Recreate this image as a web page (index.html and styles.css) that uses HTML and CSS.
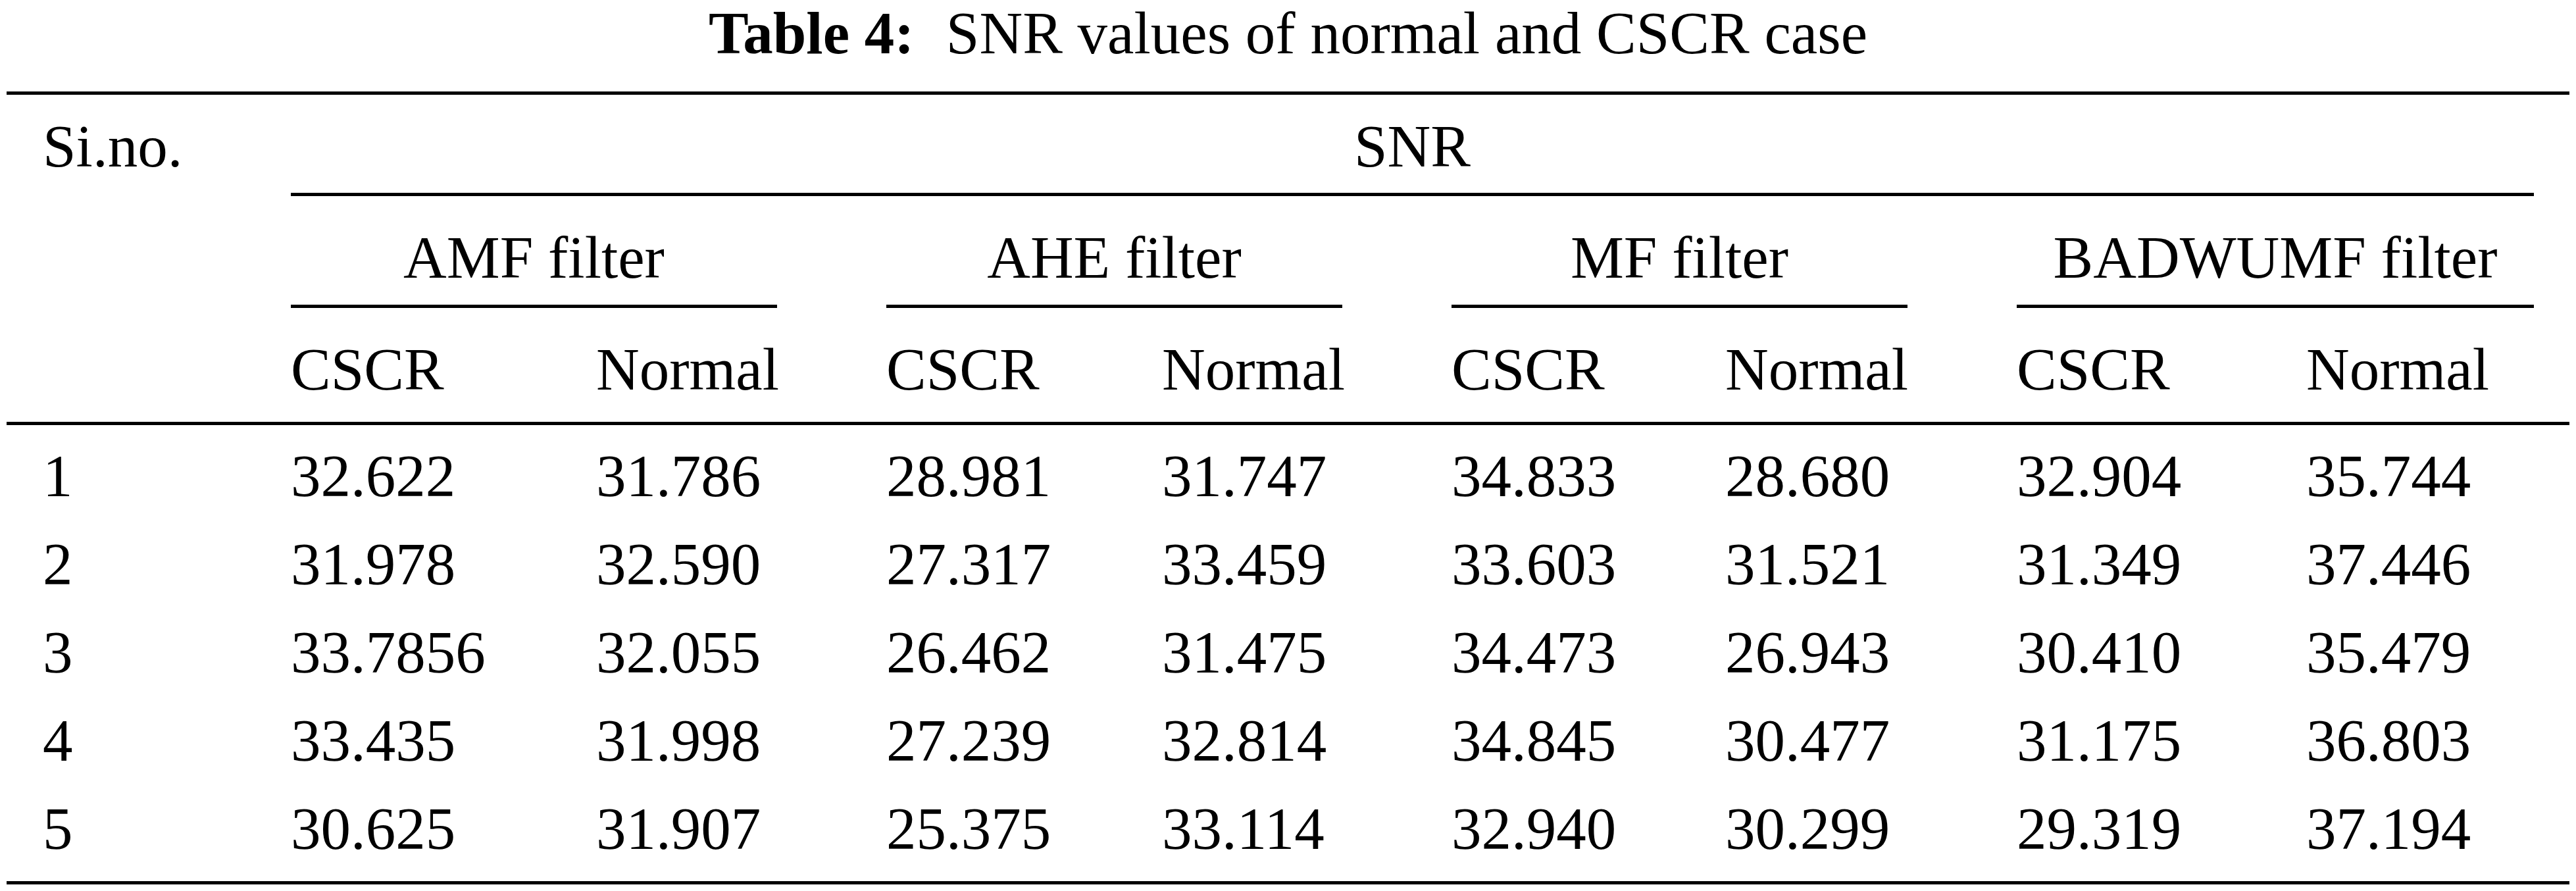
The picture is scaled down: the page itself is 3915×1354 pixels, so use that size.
FILE: index.html
```html
<!DOCTYPE html>
<html lang="en">
<head>
<meta charset="utf-8">
<title>Table 4: SNR values of normal and CSCR case</title>
<link rel="stylesheet" href="styles.css">
</head>
<body>
<div class="page">
  <div class="caption"><span class="caption-label">Table 4:</span> SNR values of normal and CSCR case</div>
  <table class="snr-table">
    <colgroup>
      <col class="c-no">
      <col class="c-amf-cscr">
      <col class="c-amf-normal">
      <col class="c-ahe-cscr">
      <col class="c-ahe-normal">
      <col class="c-mf-cscr">
      <col class="c-mf-normal">
      <col class="c-bad-cscr">
      <col class="c-bad-normal">
    </colgroup>
    <thead>
      <tr>
        <th rowspan="3" class="h-no">Si.no.</th>
        <th colspan="8" class="h-snr"><div class="rule-wrap snr-wrap">SNR</div></th>
      </tr>
      <tr>
        <th colspan="2" class="h-group"><div class="rule-wrap group-wrap">AMF filter</div></th>
        <th colspan="2" class="h-group"><div class="rule-wrap group-wrap">AHE filter</div></th>
        <th colspan="2" class="h-group"><div class="rule-wrap group-wrap">MF filter</div></th>
        <th colspan="2" class="h-group h-group-last"><div class="rule-wrap group-wrap">BADWUMF filter</div></th>
      </tr>
      <tr class="h-sub">
        <th>CSCR</th><th>Normal</th>
        <th>CSCR</th><th>Normal</th>
        <th>CSCR</th><th>Normal</th>
        <th>CSCR</th><th>Normal</th>
      </tr>
    </thead>
    <tbody>
      <tr>
        <td class="no">1</td>
        <td>32.622</td><td>31.786</td>
        <td>28.981</td><td>31.747</td>
        <td>34.833</td><td>28.680</td>
        <td>32.904</td><td>35.744</td>
      </tr>
      <tr>
        <td class="no">2</td>
        <td>31.978</td><td>32.590</td>
        <td>27.317</td><td>33.459</td>
        <td>33.603</td><td>31.521</td>
        <td>31.349</td><td>37.446</td>
      </tr>
      <tr>
        <td class="no">3</td>
        <td>33.7856</td><td>32.055</td>
        <td>26.462</td><td>31.475</td>
        <td>34.473</td><td>26.943</td>
        <td>30.410</td><td>35.479</td>
      </tr>
      <tr>
        <td class="no">4</td>
        <td>33.435</td><td>31.998</td>
        <td>27.239</td><td>32.814</td>
        <td>34.845</td><td>30.477</td>
        <td>31.175</td><td>36.803</td>
      </tr>
      <tr>
        <td class="no">5</td>
        <td>30.625</td><td>31.907</td>
        <td>25.375</td><td>33.114</td>
        <td>32.940</td><td>30.299</td>
        <td>29.319</td><td>37.194</td>
      </tr>
    </tbody>
  </table>
</div>
</body>
</html>
```
FILE: styles.css
```css
html, body {
  margin: 0;
  padding: 0;
  background: #ffffff;
}

body {
  font-family: "Liberation Serif", "Times New Roman", serif;
  font-size: 91px;
  line-height: 101px;
  color: #000000;
}

.page {
  width: 3895px;
  margin-left: 10px;
}

.caption {
  text-align: center;
  line-height: 101px;
  white-space: nowrap;
}

.caption-label {
  font-weight: bold;
  margin-right: 0.28em;
}

.snr-table {
  width: 3895px;
  margin-top: 38px;
  table-layout: fixed;
  border-collapse: separate;
  border-spacing: 0;
  border-top: 5px solid #000000;
  border-bottom: 5px solid #000000;
}

.c-no { width: 432px; }
.c-amf-cscr { width: 464px; }
.c-amf-normal { width: 441px; }
.c-ahe-cscr { width: 419px; }
.c-ahe-normal { width: 440px; }
.c-mf-cscr { width: 416px; }
.c-mf-normal { width: 443px; }
.c-bad-cscr { width: 440px; }
.c-bad-normal { width: 400px; }

.snr-table th,
.snr-table td {
  padding: 0;
  font-weight: normal;
  text-align: left;
  vertical-align: top;
  white-space: nowrap;
}

.snr-table .h-no {
  padding-top: 28px;
  padding-left: 55px;
  border-bottom: 5px solid #000000;
}

.snr-table .h-snr {
  padding-right: 54px;
}

.rule-wrap {
  border-bottom: 5px solid #000000;
  text-align: center;
}

.snr-wrap {
  padding-top: 28px;
  padding-bottom: 20px;
}

.snr-table .h-group {
  padding-right: 166px;
}

.snr-table .h-group-last {
  padding-right: 54px;
}

.group-wrap {
  padding-top: 43px;
  padding-bottom: 21px;
}

.snr-table .h-sub th {
  padding-top: 43px;
  padding-bottom: 29px;
  border-bottom: 5px solid #000000;
}

.snr-table tbody td {
  padding-top: 17px;
  padding-bottom: 16px;
}

.snr-table tbody tr:first-child td {
  padding-top: 27px;
}

.snr-table tbody tr:last-child td {
  padding-bottom: 29px;
}

.snr-table td.no {
  padding-left: 55px;
}
```
